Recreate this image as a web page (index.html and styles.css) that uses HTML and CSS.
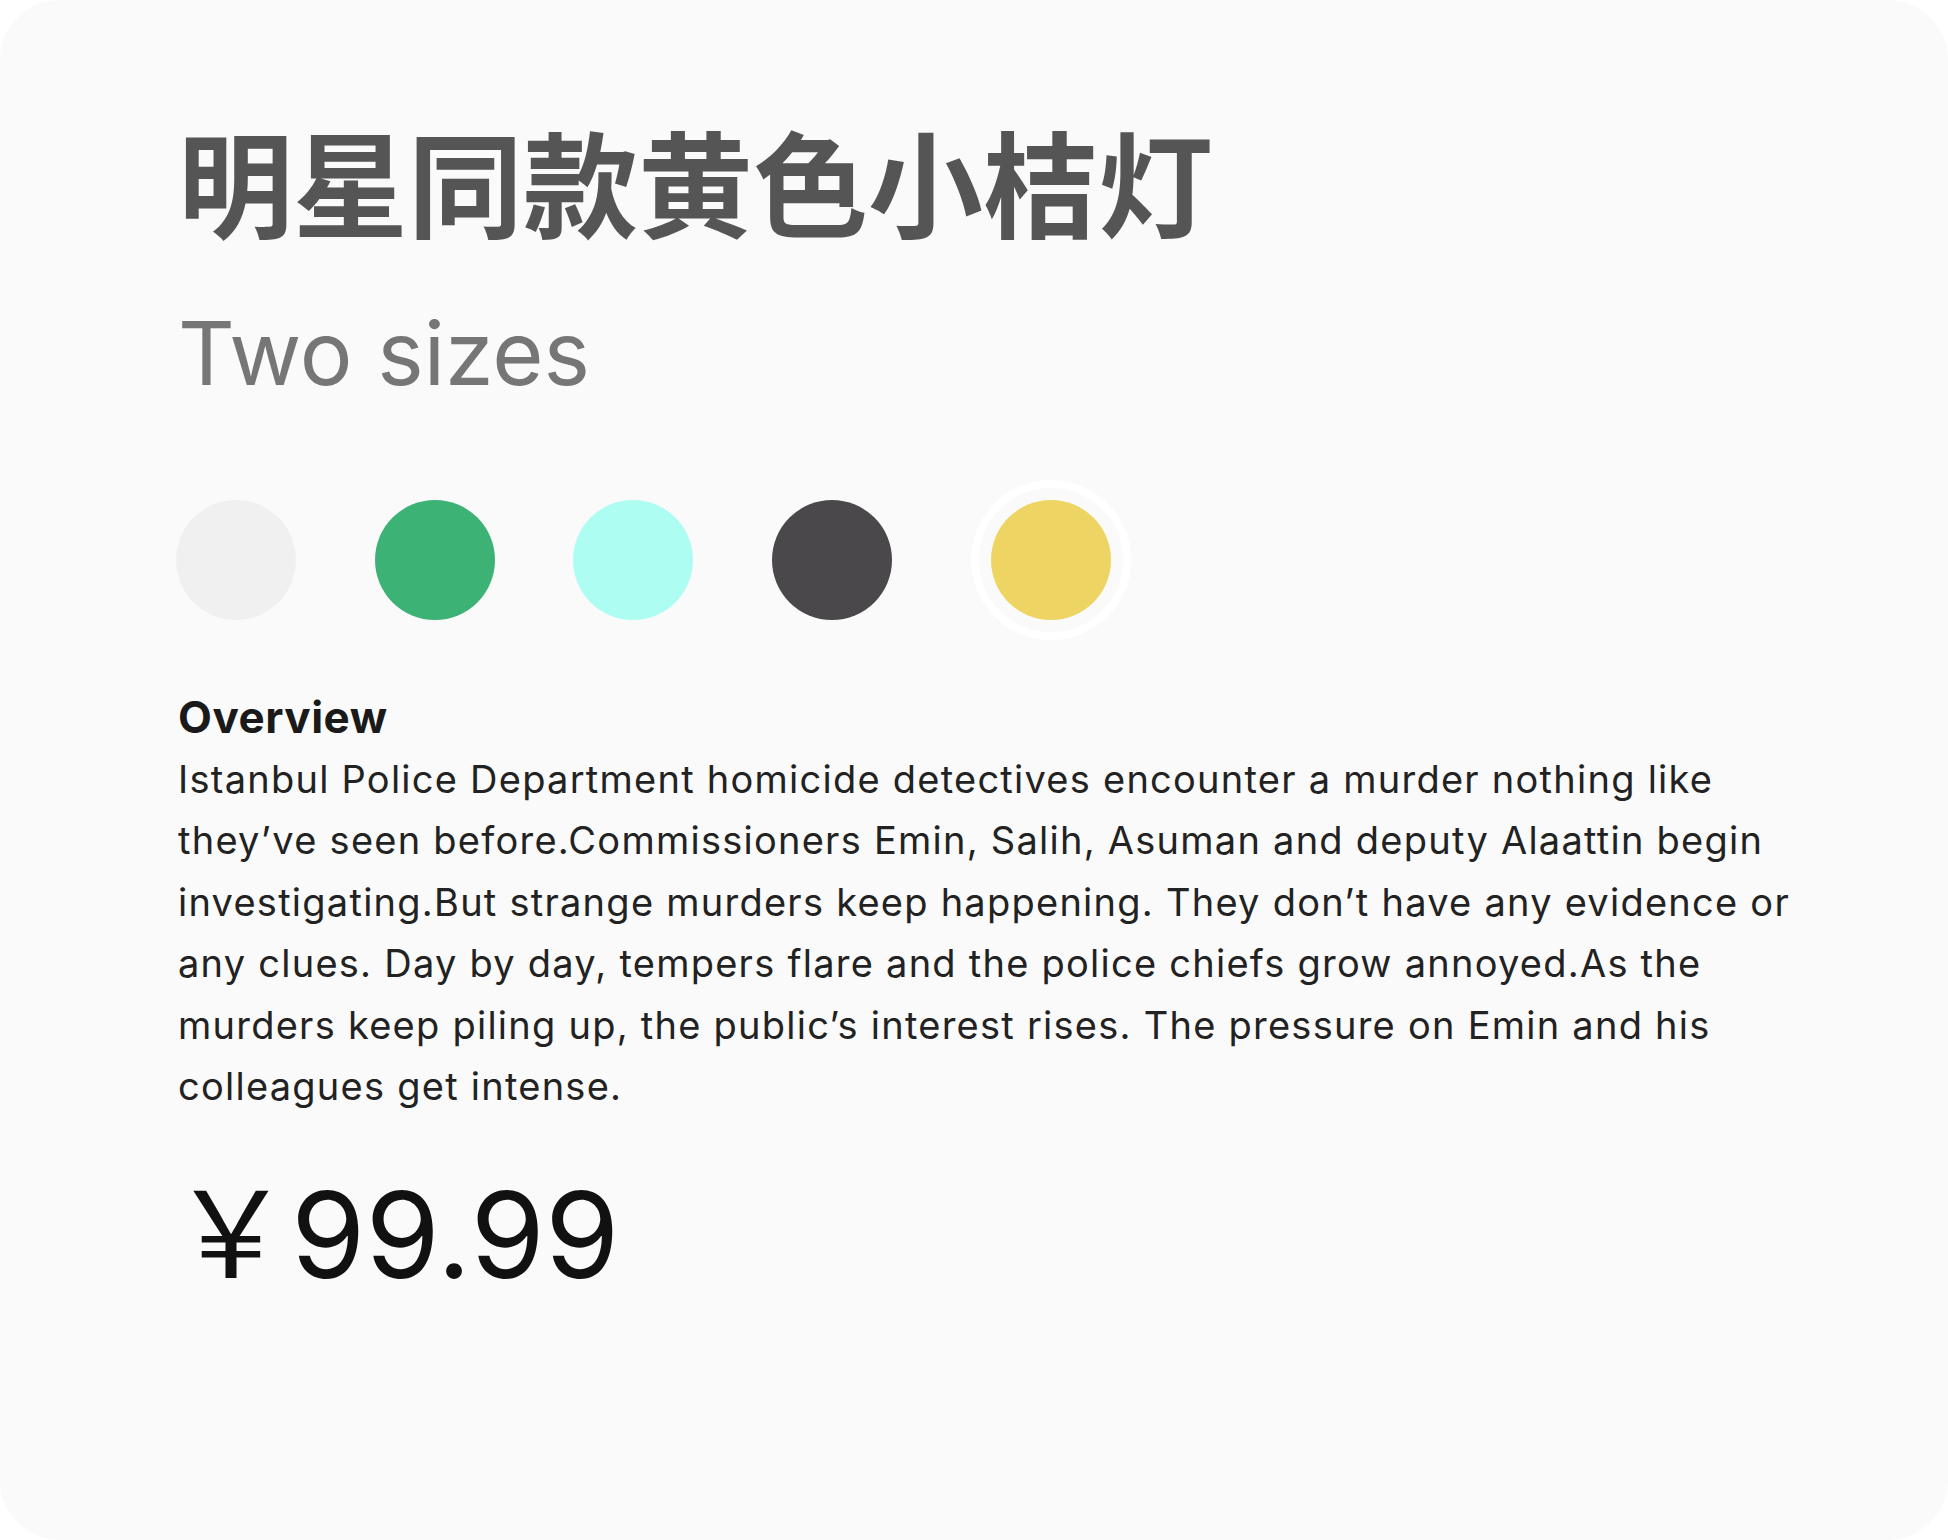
FILE: index.html
```html
<!DOCTYPE html>
<html lang="zh">
<head>
<meta charset="utf-8">
<title>明星同款黄色小桔灯</title>
<link rel="stylesheet" href="styles.css">
</head>
<body>
  <main class="card">
    <h1 class="title">明星同款黄色小桔灯</h1>
    <p class="subtitle">Two sizes</p>
    <ul class="swatches">
      <li class="swatch swatch-gray"></li>
      <li class="swatch swatch-green"></li>
      <li class="swatch swatch-cyan"></li>
      <li class="swatch swatch-dark"></li>
      <li class="swatch swatch-yellow is-selected"></li>
    </ul>
    <section class="overview">
      <h2 class="overview-title">Overview</h2>
      <p class="overview-text">Istanbul Police Department homicide detectives encounter a murder nothing like they’ve seen before.Commissioners Emin, Salih, Asuman and deputy Alaattin begin investigating.But strange murders keep happening. They don’t have any evidence or any clues. Day by day, tempers flare and the police chiefs grow annoyed.As the murders keep piling up, the public’s interest rises. The pressure on Emin and his colleagues get intense.</p>
    </section>
    <p class="price"><span class="currency">￥</span>99.99</p>
  </main>
</body>
</html>
```

FILE: styles.css
```css
* {
  box-sizing: border-box;
}

html, body {
  margin: 0;
  padding: 0;
  background: #ffffff;
}

body {
  font-family: Inter, "Noto Sans", "Noto Sans CJK SC", sans-serif;
}

.card {
  width: 1948px;
  height: 1540px;
  background: #fafafa;
  border-radius: 60px;
  padding: 122px 130px 0 178px;
  display: flex;
  flex-direction: column;
  align-items: flex-start;
}

.title {
  margin: 0;
  font-family: "Noto Sans CJK SC", sans-serif;
  font-weight: 700;
  font-size: 115px;
  line-height: 1;
  height: 115px;
  color: #555555;
}

.subtitle {
  margin: 64px 0 0;
  font-family: Inter, sans-serif;
  font-weight: 400;
  font-size: 88px;
  line-height: 105px;
  color: #767676;
}

.swatches {
  list-style: none;
  margin: 74px 0 0 -2px;
  padding: 0;
  display: flex;
  align-items: center;
  gap: 78.7px;
  height: 160px;
}

.swatch {
  width: 120px;
  height: 120px;
  border-radius: 50%;
  flex: none;
}

.swatch-gray { background: #f0f0f0; }
.swatch-green { background: #3cb274; }
.swatch-cyan { background: #adfdf2; }
.swatch-dark { background: #4a484b; }
.swatch-yellow { background: #eed563; }

.swatch.is-selected {
  width: 160px;
  height: 160px;
  border: 8px solid #ffffff;
  padding: 12px;
  background-clip: content-box;
}

.overview {
  margin-top: 47px;
  max-width: 1640px;
}

.overview-title {
  margin: 0;
  font-family: Inter, sans-serif;
  font-weight: 700;
  font-size: 44px;
  letter-spacing: 0.5px;
  line-height: 60px;
  color: #1a1a1a;
}

.overview-text {
  margin: 2px 0 0;
  font-family: Inter, sans-serif;
  font-weight: 400;
  font-size: 38px;
  letter-spacing: 1.25px;
  line-height: 61.4px;
  color: #222222;
}

.price {
  margin: 37px 0 0 -7px;
  font-family: Inter, "Noto Sans CJK SC", sans-serif;
  font-size: 120px;
  line-height: 144px;
  color: #111111;
}

.currency {
  font-family: "Noto Sans CJK SC", sans-serif;
}
```
